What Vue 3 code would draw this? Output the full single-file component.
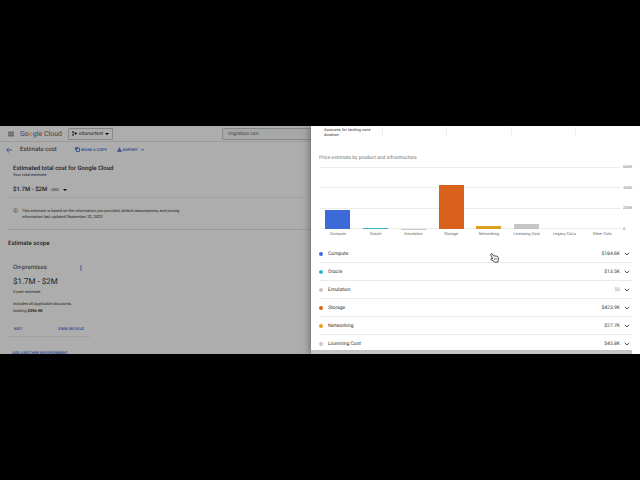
<script setup>
const notes = ['Accounts for landing zone duration', '', '', '', '']

const ticks = ['600K', '400K', '200K', '0']
const maxValue = 600

const products = [
  { name: 'Compute', value: 184.6, price: '$184.6K', color: '#3c6bd9' },
  { name: 'Oracle', value: 13.5, price: '$13.5K', color: '#2fb5c0' },
  { name: 'Emulation', value: 1, price: '$0', color: '#c6c6c8', muted: true },
  { name: 'Storage', value: 423.9, price: '$423.9K', color: '#d8621b' },
  { name: 'Networking', value: 27.7, price: '$27.7K', color: '#dfa020' },
  { name: 'Licensing Cost', value: 45.8, price: '$45.8K', color: '#c6c6c8' },
]

const bars = [
  ...products,
  { name: 'Legacy CoLo', value: 0, color: '#c6c6c8' },
  { name: 'Other Colo', value: 0, color: '#c6c6c8' },
]

const barHeight = (value) => `${(value / maxValue) * 100}%`
</script>

<template>
  <div class="screen">
    <div class="viewport">
      <div class="page">
        <header class="topbar">
          <button class="icon-btn menu" aria-label="Main menu">
            <svg viewBox="0 0 6 6" width="6" height="6"><path d="M0 1.2h6M0 3h6M0 4.8h6" stroke="#333" stroke-width=".8" /></svg>
          </button>
          <a class="logo" href="#"><b class="blue">G</b><b class="red">o</b><b class="yellow">o</b><b class="blue">g</b><b class="green">l</b><b class="red">e</b> Cloud</a>
          <button class="project">
            <svg viewBox="0 0 6 6" width="5" height="5"><path d="M1.2 1.300v3.400M1.200 1.300 4.500 3" stroke="#222" stroke-width=".5" /><circle cx="1.2" cy="1.2" r="1" /><circle cx="1.2" cy="4.8" r="1" /><circle cx="4.5" cy="3" r="1.3" /></svg>
            <span>eitanortest</span>
            <svg class="caret" viewBox="0 0 4 2" width="4" height="2"><path d="M0 0h4L2 2z" /></svg>
          </button>
          <input class="search" type="text" value="migration cen" aria-label="Search" />
        </header>

        <div class="subbar">
          <button class="icon-btn back" aria-label="Back">
            <svg viewBox="0 0 6 6" width="6" height="6"><path d="M6 3H.8M3 .6.6 3 3 5.4" fill="none" stroke="#27448c" stroke-width=".8" /></svg>
          </button>
          <h1>Estimate cost</h1>
          <button class="action copy">
            <svg viewBox="0 0 5 5" width="5" height="5"><path d="M1.6 1.3h2.9v3.3H1.6zM.5 3.6V.4h2.8" fill="none" stroke="#27448c" stroke-width=".8" /></svg>
            <span>MAKE A COPY</span>
          </button>
          <button class="action">
            <svg viewBox="0 0 5 5" width="5" height="5"><path d="M2.500 .3 1 2.700h3zM.4 3.200h4.200v1.500H.4z" fill="#27448c" /></svg>
            <span>EXPORT</span>
            <svg class="mini" viewBox="0 0 4 2" width="3" height="2"><path d="M0 0h4L2 2z" fill="#27448c" /></svg>
          </button>
        </div>

        <main>
          <section class="total">
            <h2>Estimated total cost for Google Cloud</h2>
            <p class="small">Your total estimate</p>
            <div class="amount">
              <strong>$1.7M - $2M</strong>
              <select aria-label="Currency"><option>USD</option></select>
              <svg class="caret" viewBox="0 0 4 2" width="4" height="2"><path d="M0 0h4L2 2z" /></svg>
            </div>
          </section>
          <section class="notice">
            <svg viewBox="0 0 5 5" width="5" height="5"><circle cx="2.5" cy="2.5" r="2" fill="none" stroke="#444" stroke-width=".5" /><path d="M2.5 1.3v.5M2.5 2.2v1.5" stroke="#444" stroke-width=".6" /></svg>
            <p>This estimate is based on the information you provided, default assumptions, and pricing information last updated September 22, 2023</p>
          </section>
          <h2 class="scope-title">Estimate scope</h2>
          <article class="card">
            <div class="card-head">
              <h3>On-premises</h3>
              <button class="icon-btn" aria-label="More options">
                <svg viewBox="0 0 2 6" width="2" height="6"><circle cx="1" cy="1" r=".7" fill="#27448c" /><circle cx="1" cy="3" r=".7" fill="#27448c" /><circle cx="1" cy="5" r=".7" fill="#27448c" /></svg>
              </button>
            </div>
            <p class="card-total">$1.7M - $2M</p>
            <p class="small">5-year estimate</p>
            <p class="includes">Includes all applicable discounts, totaling <b>$396.9K</b></p>
            <div class="card-actions">
              <button>EDIT</button>
              <button>VIEW DETAILS</button>
            </div>
          </article>
          <button class="add">ADD ANOTHER ENVIRONMENT</button>
        </main>
      </div>

      <aside class="drawer">
        <div class="notes">
          <p v-for="(note, i) in notes" :key="i">{{ note }}</p>
        </div>
        <h2>Price estimate by product and infrastructure</h2>
        <div class="chart">
          <div class="grid">
            <div v-for="tick in ticks" :key="tick" class="tick"><i></i><span>{{ tick }}</span></div>
          </div>
          <div class="bars">
            <div v-for="bar in bars" :key="bar.name" class="slot">
              <div class="bar" :style="{ height: barHeight(bar.value), background: bar.color }"></div>
            </div>
          </div>
        </div>
        <div class="labels">
          <span v-for="bar in bars" :key="bar.name">{{ bar.name }}</span>
        </div>
        <ul class="products">
          <li v-for="item in products" :key="item.name">
            <i class="dot" :style="{ background: item.color }"></i>
            <span class="name">{{ item.name }}</span>
            <span class="price" :class="{ muted: item.muted }">{{ item.price }}</span>
            <button class="icon-btn" :aria-label="'Expand ' + item.name">
              <svg viewBox="0 0 6 4" width="6" height="4"><path d="M.8 .8 3 3 5.2 .8" fill="none" stroke="#444" stroke-width=".9" /></svg>
            </button>
          </li>
        </ul>
        <div class="scrollbar"></div>
      </aside>

      <svg class="cursor" viewBox="0 0 9 10" width="9" height="10">
        <path d="M1 .9c.5-.5 1.100-.3 1.400.2l1.200 2 .6-.2.9.1.9 0 .9.300.8.2.5.900.3 2.300-.4 1.300-.1.900-3.400.4-.8-.9-2.700-1.700c-.7-.6-.2-1.200.5-1.100l1.200.2L.9 2.200C.7 1.700.6 1.300 1 .9z" fill="#fff" stroke="#222" stroke-width=".8" stroke-linejoin="round" />
        <path d="M4.300 5.300l.3 1.700M5.600 5.200l.3 1.700M6.800 5l.2 1.600" stroke="#333" stroke-width=".5" />
      </svg>
    </div>
  </div>
</template>

<style>
body {
  margin: 0;
  background: #000;
}
</style>

<style scoped>
* {
  box-sizing: border-box;
}
.screen {
  min-height: 100vh;
  display: flex;
  align-items: center;
  background: #000;
  font-family: Roboto, "Liberation Sans", sans-serif;
  font-size: 4px;
  line-height: 6px;
  text-rendering: geometricPrecision;
  color: #1c1c1c;
}
.viewport {
  position: relative;
  width: 100%;
  aspect-ratio: 640 / 228;
  overflow: hidden;
  background: #adadad;
}
h1, h2, h3, p, ul {
  margin: 0;
  padding: 0;
  font-weight: 400;
}
button, input, select {
  margin: 0;
  padding: 0;
  border: 0;
  background: none;
  font: inherit;
  color: inherit;
  text-rendering: inherit;
}
svg {
  display: block;
  flex: none;
}
a {
  color: inherit;
  text-decoration: none;
}
.icon-btn {
  display: flex;
  align-items: center;
  justify-content: center;
}
.topbar {
  display: flex;
  align-items: center;
  height: 16px;
  padding-left: 8px;
  border-bottom: 1px solid #9b9b9b;
}
.logo {
  margin-left: 6px;
  width: 48px;
  font-size: 7px;
  line-height: 8px;
  color: #444;
  white-space: nowrap;
}
.logo b {
  font-weight: 500;
}
.blue { color: #2d5ba8; }
.red { color: #a9352d; }
.yellow { color: #b58a10; }
.green { color: #2b7a40; }
.project {
  display: flex;
  align-items: center;
  gap: 2px;
  height: 12px;
  width: 45px;
  padding: 0 4px 0 3px;
  border: 1px solid #888;
  border-radius: 1px;
  font-size: 5px;
}
.project .caret {
  margin-left: auto;
}
.search {
  flex: 1;
  height: 12px;
  margin-left: 109px;
  padding: 0 5px;
  font-size: 5px;
  border: 1px solid #888;
  border-radius: 1px;
  background: #a6a8a8;
  color: #444;
}
.subbar {
  display: flex;
  align-items: center;
  height: 15px;
  padding-left: 6px;
}
.subbar h1 {
  width: 55px;
  margin-left: 8px;
  font-size: 6px;
}
.action {
  display: flex;
  align-items: center;
  gap: 1px;
  margin-right: 10px;
  font-weight: 500;
  color: #27448c;
}
.action .mini {
  margin-left: 2px;
}
main {
  padding-left: 8px;
}
.total {
  width: 297px;
  height: 41px;
  padding: 8px 5px 0;
  border-bottom: 1px solid #9f9f9f;
}
.total h2 {
  font-size: 6px;
  line-height: 8px;
  font-weight: 500;
}
.small {
  line-height: 4px;
}
.amount {
  display: flex;
  align-items: center;
  gap: 4px;
  margin-top: 9px;
}
.amount strong {
  font-size: 6px;
  line-height: 8px;
  font-weight: 500;
}
.amount select {
  appearance: none;
}
.notice {
  display: flex;
  gap: 4px;
  height: 32px;
  padding: 10px 5px 0;
  border-bottom: 1px solid #999;
}
.notice p {
  width: 166px;
}
.scope-title {
  margin-top: 10px;
  font-size: 6px;
  line-height: 8px;
  font-weight: 500;
}
.card {
  width: 82px;
  margin-top: 11px;
  padding: 5px 6px 4px 5px;
  border-radius: 1px;
  box-shadow: 0 1px 1px #a0a0a0;
}
.card-head {
  display: flex;
  justify-content: space-between;
  align-items: center;
  padding-right: 2px;
}
.card h3 {
  font-size: 6px;
  line-height: 8px;
}
.card-total {
  margin-top: 4px;
  font-size: 8px;
  line-height: 12px;
}
.card .small {
  margin-top: 2px;
}
.includes {
  margin-top: 6px;
  line-height: 7px;
}
.card-actions {
  display: flex;
  justify-content: space-between;
  margin-top: 12px;
  padding-left: 1px;
  font-weight: 500;
  color: #27448c;
}
.add {
  display: block;
  margin: 14px 0 0 4px;
  font-weight: 500;
  color: #27448c;
}
.drawer {
  position: absolute;
  inset: 0 0 0 auto;
  width: 51.4%;
  padding: 0 8px;
  background: #fff;
  box-shadow: 0 0 8px #555;
  color: #333;
}
.notes {
  display: grid;
  grid-template-columns: repeat(5, 1fr);
  margin: 0 -8px;
  padding: 1px 0 0 8px;
}
.notes p {
  height: 10px;
  padding: 0 0 0 5px;
  border-right: 1px solid #eee;
  line-height: 5px;
}
.notes p:last-child {
  border: 0;
}
.drawer h2 {
  margin-top: 17px;
  font-size: 5px;
  line-height: 8px;
  color: #757575;
}
.chart {
  position: relative;
  margin-top: 2px;
}
.grid {
  display: flex;
  flex-direction: column;
  justify-content: space-between;
  height: 68px;
}
.tick {
  display: flex;
  align-items: center;
  height: 6px;
  color: #777;
}
.tick i {
  flex: 1;
  height: 1px;
  background: #ececec;
}
.tick span {
  width: 11px;
  padding-left: 2px;
}
.bars {
  position: absolute;
  inset: 3px 11px 3px 0;
  display: grid;
  grid-template-columns: repeat(8, 1fr);
}
.slot {
  display: flex;
  align-items: flex-end;
  justify-content: center;
}
.bar {
  width: 66%;
}
.labels {
  display: grid;
  grid-template-columns: repeat(8, 1fr);
  margin-right: 11px;
  line-height: 4px;
  text-align: center;
  color: #666;
}
.products {
  margin-top: 9px;
  list-style: none;
  font-size: 5px;
}
.products li {
  display: flex;
  align-items: center;
  height: 18px;
  padding-right: 2px;
  border-bottom: 1px solid #ebebeb;
}
.dot {
  width: 4px;
  height: 4px;
  border-radius: 50%;
}
.name {
  flex: 1;
  margin-left: 5px;
}
.price {
  margin-right: 4px;
}
.price.muted {
  color: #999;
}
.scrollbar {
  position: absolute;
  inset: auto 8px 0 0;
  height: 4px;
  background: #c4c4c4;
}
.cursor {
  position: absolute;
  left: 76.6%;
  top: 55.5%;
}
</style>
